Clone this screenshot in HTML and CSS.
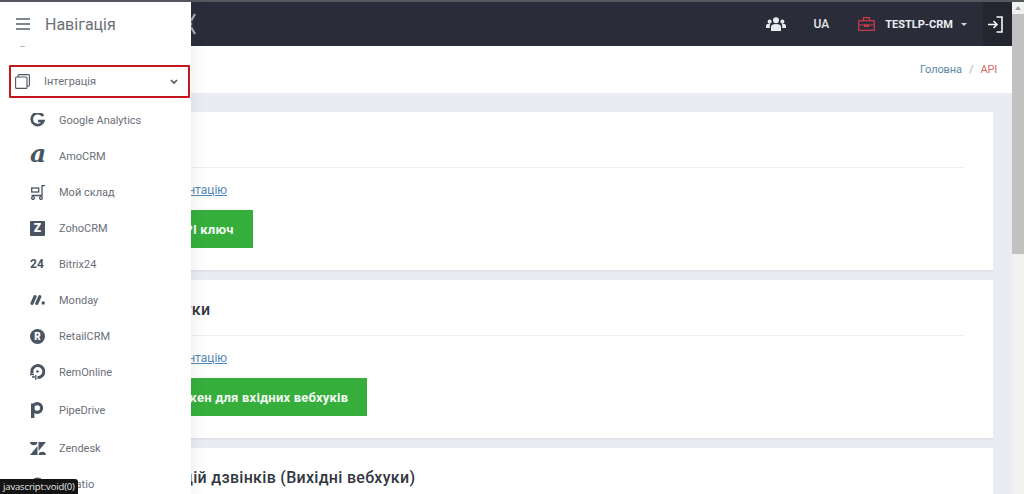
FILE: index.html
```html
<!DOCTYPE html>
<html lang="uk">
<head>
<meta charset="utf-8">
<title>API</title>
<link rel="stylesheet" href="styles.css">
</head>
<body>
<div class="topline"></div>
<div class="window">
  <div class="page">
    <header class="topbar">
      <svg class="logo-bit" width="14" height="22" viewBox="0 0 14 22"><path d="M1 1 L8 11 L1 21 M12 1 L8 8 M8 14 L12 21" fill="none" stroke="#a5a7ad" stroke-width="2.400"/></svg>
      <div class="top-actions">
        <svg class="team" width="20" height="14" viewBox="0 0 20 14"><g fill="#e9eaee"><circle cx="10" cy="3.200" r="3"/><circle cx="3.600" cy="4.400" r="2"/><circle cx="16.400" cy="4.400" r="2"/><path d="M5 14V10c0-2 1.800-3 5-3s5 1 5 3v4z"/><path d="M0 11V9c0-1.500 1.200-2.500 3.600-2.500.5 0 .8 0 1 .1C3.700 7.500 3.800 9 3.800 11zM20 11V9c0-1.500-1.200-2.500-3.600-2.500-.5 0-.8 0-1 .1.900.9.800 2.400.800 4.400z"/></g></svg>
        <span class="lang">UA</span>
        <svg class="case" width="17" height="14" viewBox="0 0 17 14"><g fill="none" stroke="#d03a4a" stroke-width="1.200"><rect x=".7" y="3.700" width="15.600" height="9.600"/><path d="M5.500 3.500V.7h6v2.800M.7 8h15.600"/><path d="M6.500 8h4v1.500h-4z"/></g></svg>
        <span class="account">TESTLP-CRM</span>
        <span class="caret"></span>
        <div class="exit">
          <svg width="16" height="17" viewBox="0 0 16 17"><path d="M9.500 1H15v15H9.500M1 8.500h8.500M6.500 5l3.500 3.500L6.500 12" fill="none" stroke="#f6f7f8" stroke-width="1.600"/></svg>
        </div>
      </div>
    </header>
    <nav class="crumbs"><a class="crumb-link">Головна</a><span class="crumb-sep">/</span><span class="crumb-now">API</span></nav>
    <main class="content">
      <section class="card">
        <h2 class="card-title">API</h2>
        <a class="doc-link">Переглянути документацію</a>
        <button class="green-btn">Згенерувати API ключ</button>
      </section>
      <section class="card">
        <h2 class="card-title">Вхідні API вебхуки</h2>
        <a class="doc-link">Переглянути документацію</a>
        <button class="green-btn">Згенерувати токен для вхідних вебхуків</button>
      </section>
      <section class="card">
        <h2 class="card-title">Сповіщення подій дзвінків (Вихідні вебхуки)</h2>
      </section>
    </main>
  </div>
  <div class="scrollbar"><div class="scroll-arrow"></div><div class="scroll-thumb"></div></div>
</div>

<aside class="sidebar">
  <div class="side-head">
    <svg width="14" height="12" viewBox="0 0 14 12"><path d="M0 1h14M0 6h14M0 11h14" stroke="#5a5f68" stroke-width="1.400"/></svg>
    <span class="side-title">Навігація</span>
  </div>
  <div class="side-remnant"></div>
  <div class="side-active">
    <svg width="15" height="15" viewBox="0 0 15 15"><g fill="none" stroke="#4f5661" stroke-width="1.100"><rect x=".6" y="3" width="11.400" height="11.400" rx="1"/><path d="M3 3V1.600a1 1 0 0 1 1-1h9.400a1 1 0 0 1 1 1V11a1 1 0 0 1-1 1H12"/></g></svg>
    <span class="active-label">Інтеграція</span>
    <svg class="chev" width="8" height="6" viewBox="0 0 8 6"><path d="M1 1l3 3 3-3" fill="none" stroke="#4f5661" stroke-width="1.600"/></svg>
  </div>
  <ul class="side-list">
    <li class="side-item"><span class="ico"><svg width="15" height="15" viewBox="0 0 15 15"><path d="M13 3.200A6 6 0 1 0 13.400 8H8" fill="none" stroke="#4a5563" stroke-width="2.700"/></svg></span>Google Analytics</li>
    <li class="side-item"><span class="ico ico-a">a</span>AmoCRM</li>
    <li class="side-item"><span class="ico"><svg width="15" height="15" viewBox="0 0 15 15"><g fill="none" stroke="#4a5563" stroke-width="1.300"><path d="M15 .7h-3V10.500H1.500"/><rect x="1.700" y="3" width="7" height="4"/><circle cx="3" cy="13" r="1.400"/><circle cx="11" cy="13" r="1.400"/></g></svg></span>Мой склад</li>
    <li class="side-item"><span class="ico ico-z">Z</span>ZohoCRM</li>
    <li class="side-item"><span class="ico ico-24">24</span>Bitrix24</li>
    <li class="side-item"><span class="ico"><svg width="15" height="10" viewBox="0 0 15 10"><path d="M2 8.300L5 1.700M6.800 8.300L9.800 1.700" stroke="#4a5563" stroke-width="3.200" stroke-linecap="round"/><circle cx="13.200" cy="8" r="1.700" fill="#4a5563"/></svg></span>Monday</li>
    <li class="side-item"><span class="ico ico-r">R</span>RetailCRM</li>
    <li class="side-item"><span class="ico"><svg width="15" height="16" viewBox="0 0 15 16"><path d="M2.200 9.500A6 6 0 1 1 7.500 13.500" fill="none" stroke="#4a5563" stroke-width="3"/><circle cx="7.500" cy="7.500" r="1.300" fill="#4a5563"/><path d="M0 10.500h4M2 13h3M5.800 11v5" stroke="#4a5563" stroke-width="1.300"/></svg></span>RemOnline</li>
    <li class="side-item side-tall"><span class="ico"><svg width="14" height="16" viewBox="0 0 14 16"><circle cx="7.200" cy="6" r="4.400" fill="none" stroke="#4a5563" stroke-width="3.200"/><path d="M2.700 1.500V16" stroke="#4a5563" stroke-width="3.400"/></svg></span>PipeDrive</li>
    <li class="side-item"><span class="ico"><svg width="16" height="13" viewBox="0 0 16 13"><g fill="#4a5563"><path d="M0 0h7.500A3.800 3.800 0 0 1 0 0z"/><path d="M8.500 0H16L8.500 9z"/><path d="M7.500 4v9H0z"/><path d="M8.500 13a3.800 3.800 0 0 1 7.500 0z"/></g></svg></span>Zendesk</li>
    <li class="side-item"><span class="ico"><svg width="15" height="15" viewBox="0 0 15 15"><circle cx="7.500" cy="7.500" r="7" fill="#4a5563"/></svg></span>Creatio</li>
  </ul>
</aside>
<div class="status-tip">javascript:void(0)</div>
</body>
</html>
```

FILE: styles.css
```css
* { box-sizing: border-box; }
html, body { margin: 0; height: 494px; overflow: hidden; }
body {
  font-family: Roboto, "Open Sans", "Liberation Sans", sans-serif;
  background: #fff;
  color: #4f5661;
  position: relative;
}
.topline { height: 2px; background: #55585e; }
.window { display: flex; height: 492px; }
.page { flex: 1; min-width: 0; display: flex; flex-direction: column; overflow: hidden; }

.topbar {
  height: 44px;
  flex: none;
  background: #2a2c3a;
  display: flex;
  align-items: center;
  justify-content: space-between;
  padding-left: 183px;
}
.logo-bit { display: block; }
.top-actions { display: flex; align-items: center; height: 100%; }
.team { margin-right: 27px; }
.lang { color: #e6e7ea; font-size: 12px; font-weight: 500; margin-right: 29px; }
.case { margin-right: 10px; }
.account { color: #eceef1; font-size: 11px; font-weight: 700; margin-right: 8px; }
.caret {
  width: 0; height: 0;
  border-left: 3.500px solid transparent;
  border-right: 3.500px solid transparent;
  border-top: 3.500px solid #d5d7db;
  margin-right: 16px;
}
.exit {
  width: 29px; height: 100%;
  background: #23252f;
  display: flex; align-items: center; justify-content: center;
  padding-right: 5px;
}

.crumbs {
  height: 47px;
  flex: none;
  background: #fff;
  display: flex;
  align-items: center;
  justify-content: flex-end;
  padding-right: 15px;
  font-size: 11px;
}
.crumb-link { color: #5b88a8; letter-spacing: -0.1px; }
.crumb-sep { color: #a5abb3; margin: 0 7px; }
.crumb-now { color: #d9686b; letter-spacing: -0.2px; }

.content {
  flex: 1;
  background: #e9edf2;
  padding: 19px 19px 0 29px;
  display: flex;
  flex-direction: column;
  gap: 10px;
}
.card {
  background: #fff;
  height: 158px;
  flex: none;
  padding: 0 28px 0 37px;
  box-shadow: 0 2px 0 #e1e5ea;
  display: flex;
  flex-direction: column;
  align-items: flex-start;
}
.card-title {
  width: 100%;
  height: 56px;
  margin: 0;
  padding-top: 20px;
  border-bottom: 1px solid #eceef1;
  font-size: 16px;
  line-height: 20px;
  font-weight: 500;
  color: #33373f;
  letter-spacing: 0.3px;
}
.doc-link {
  margin: 15px 0 0 6px;
  font-size: 12px;
  line-height: 14px;
  color: #4f85b5;
  text-decoration: underline;
}
.green-btn {
  margin: 13px 0 0 8px;
  height: 38px;
  padding: 0 19px;
  border: 0;
  background: #36ae3c;
  color: #f4fbf4;
  font-family: inherit;
  font-size: 13px;
  font-weight: 700;
  letter-spacing: 0.2px;
}

.scrollbar { width: 12px; flex: none; background: #f1f1f1; display: flex; flex-direction: column; }
.scroll-arrow { height: 12px; flex: none; background: #f1f1f1; position: relative; }
.scroll-arrow::after {
  content: ""; position: absolute; left: 3px; top: 4px;
  border-left: 3px solid transparent; border-right: 3px solid transparent;
  border-bottom: 4px solid #a3a3a3;
}
.scroll-thumb { height: 240px; background: #c1c1c1; }

.sidebar {
  position: absolute;
  left: 0; top: 2px;
  width: 191px;
  height: 492px;
  background: #fff;
  box-shadow: 4px 0 12px rgba(60, 70, 85, 0.08);
  overflow: hidden;
}
.side-head { height: 44px; display: flex; align-items: center; padding-left: 16px; gap: 15px; }
.side-title { font-size: 16px; color: #6b6f76; }
.side-remnant { width: 5px; height: 1px; background: #b5b8bd; margin: 0 0 0 20px; }
.side-active {
  margin: 18px 0 0 9px;
  width: 181px; height: 33px;
  border: 2px solid #c4161f;
  border-radius: 1px;
  display: flex; align-items: center;
  padding-left: 4px;
}
.active-label { font-size: 11px; color: #6b7078; margin-left: 14px; flex: 1; }
.chev { margin-right: 10px; }
.side-list { list-style: none; margin: 4px 0 0; padding: 0; }
.side-item {
  height: 36px;
  display: flex; align-items: center;
  padding-left: 30px;
  font-size: 11px;
  color: #6b7078;
}
.side-tall { height: 40px; }
.ico { width: 29px; flex: none; display: flex; align-items: center; color: #4a5563; }
.ico-a { font-family: "DejaVu Serif", serif; font-style: italic; font-weight: 700; font-size: 25px; line-height: 15px; height: 15px; padding-bottom: 5px; }
.ico-z {
  width: 15px; height: 15px; margin-right: 14px;
  background: #4a5563; color: #fff;
  font-size: 12px; font-weight: 900;
  justify-content: center;
  border-radius: 1px;
}
.ico-24 { font-size: 12px; font-weight: 700; }
.ico-r {
  width: 15px; height: 15px; margin-right: 14px;
  background: #4a5563; color: #fff;
  font-size: 10px; font-weight: 900;
  justify-content: center;
  border-radius: 50%;
}
.status-tip {
  position: absolute;
  left: 0; bottom: 0;
  height: 15px;
  padding: 0 3px 0 3px;
  background: #141414;
  color: #e8e8e8;
  font-family: "Open Sans", sans-serif;
  font-size: 9.500px;
  letter-spacing: -0.15px;
  line-height: 15px;
  border-top-right-radius: 3px;
}
```
